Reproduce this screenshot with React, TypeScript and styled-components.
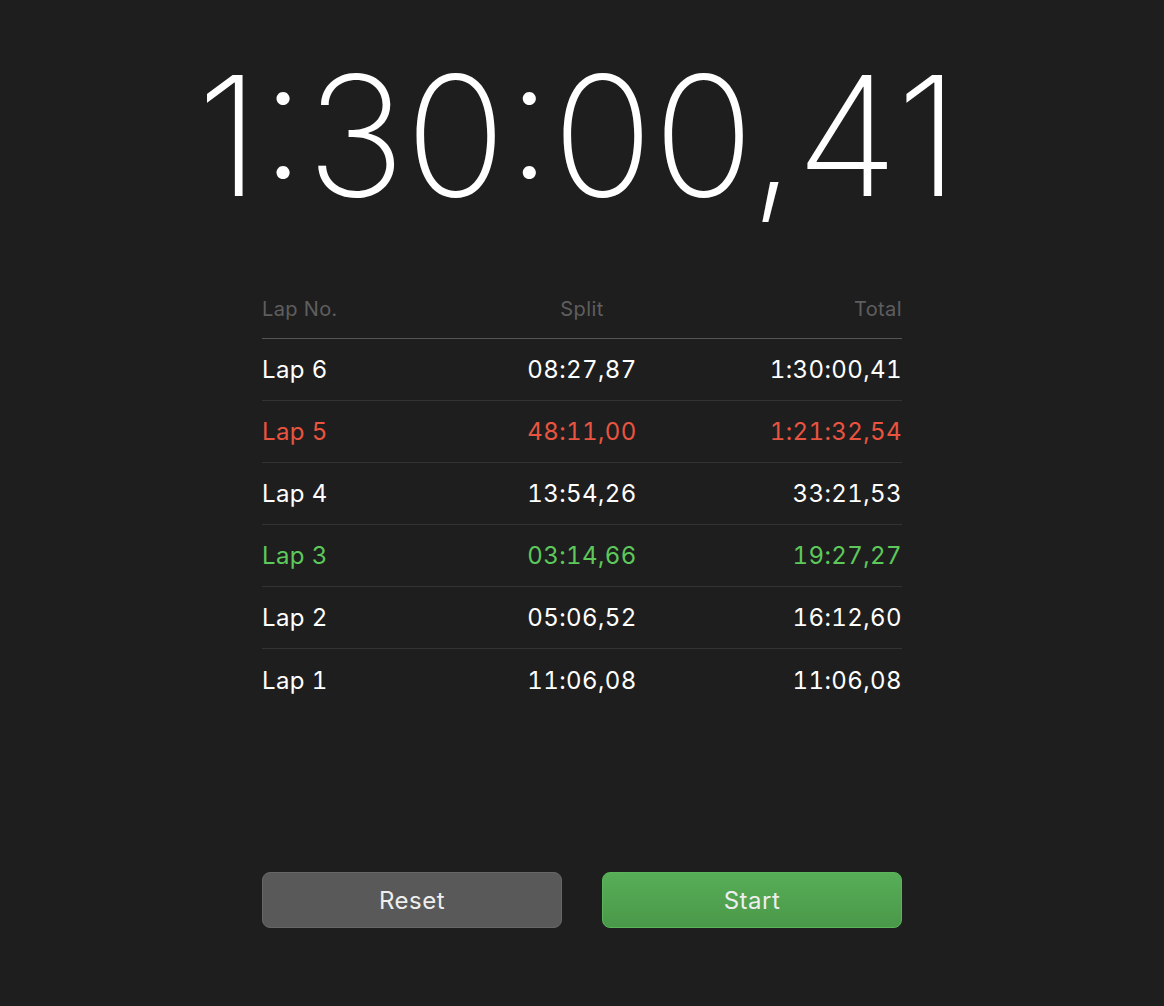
import styled, { createGlobalStyle } from "styled-components";

const GlobalStyle = createGlobalStyle`
	html, body {
		margin: 0;
		padding: 0;
		background: #1e1e1e;
	}
	body {
		font-family: "Inter", "Roboto", "Liberation Sans", sans-serif;
		-webkit-font-smoothing: antialiased;
	}
`;

const Page = styled.div`
	width: 1164px;
	height: 1006px;
	display: flex;
	flex-direction: column;
	align-items: center;
	background: #1e1e1e;
	color: #fff;
	overflow: hidden;
`;

const Clock = styled.div`
	margin-top: 35px;
	margin-right: 8px;
	font-size: 167px;
	font-weight: 160;
	line-height: 200px;
	letter-spacing: 0;
	color: #fff;
`;

const Laps = styled.div`
	margin-top: 44px;
	width: 640px;
	display: flex;
	flex-direction: column;
`;

const Row = styled.div<{ $tone?: "red" | "green" | "head" }>`
	display: grid;
	grid-template-columns: 1fr 1fr 1fr;
	align-items: center;
	height: ${(p) => (p.$tone === "head" ? "60px" : "62px")};
	font-size: ${(p) => (p.$tone === "head" ? "20px" : "24px")};
	letter-spacing: 0.4px;
	font-variant-numeric: tabular-nums;
	color: ${(p) =>
		p.$tone === "red" ? "#e8543f" : p.$tone === "green" ? "#5cc95a" : p.$tone === "head" ? "#5e5e5e" : "#fff"};
	border-bottom: 1px solid ${(p) => (p.$tone === "head" ? "#555" : "#333")};
	box-sizing: border-box;
	&:last-child {
		border-bottom: none;
	}
`;

const Cell = styled.span<{ $align: "left" | "center" | "right" }>`
	text-align: ${(p) => p.$align};
`;

const Buttons = styled.div`
	margin-top: auto;
	margin-bottom: 78px;
	width: 640px;
	display: flex;
	justify-content: space-between;
`;

const Button = styled.button<{ $primary?: boolean }>`
	width: 300px;
	height: 56px;
	border-radius: 8px;
	font-family: inherit;
	font-size: 24px;
	letter-spacing: 0.5px;
	color: #eee;
	cursor: pointer;
	border: 1px solid ${(p) => (p.$primary ? "#5ab55a" : "#666")};
	background: ${(p) => (p.$primary ? "linear-gradient(#57ae57, #4a984a)" : "#595959")};
`;

const laps = [
	{ n: 6, split: "08:27,87", total: "1:30:00,41" },
	{ n: 5, split: "48:11,00", total: "1:21:32,54", tone: "red" as const },
	{ n: 4, split: "13:54,26", total: "33:21,53" },
	{ n: 3, split: "03:14,66", total: "19:27,27", tone: "green" as const },
	{ n: 2, split: "05:06,52", total: "16:12,60" },
	{ n: 1, split: "11:06,08", total: "11:06,08" },
];

export default function App() {
	return (
		<Page>
			<GlobalStyle />
			<Clock>1:30:00,41</Clock>
			<Laps>
				<Row $tone="head">
					<Cell $align="left">Lap No.</Cell>
					<Cell $align="center">Split</Cell>
					<Cell $align="right">Total</Cell>
				</Row>
				{laps.map((lap) => (
					<Row key={lap.n} $tone={lap.tone}>
						<Cell $align="left">Lap {lap.n}</Cell>
						<Cell $align="center">{lap.split}</Cell>
						<Cell $align="right">{lap.total}</Cell>
					</Row>
				))}
			</Laps>
			<Buttons>
				<Button>Reset</Button>
				<Button $primary>Start</Button>
			</Buttons>
		</Page>
	);
}
